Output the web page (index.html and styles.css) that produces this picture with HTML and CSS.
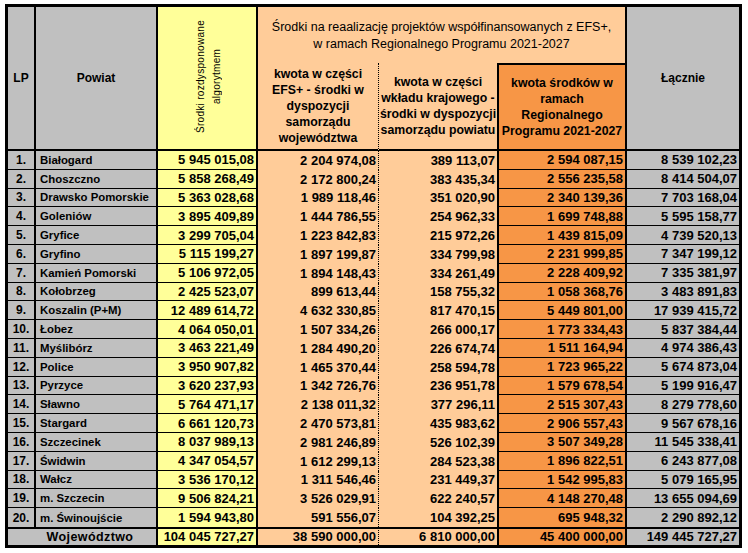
FILE: index.html
```html
<!DOCTYPE html>
<html lang="pl">
<head>
<meta charset="utf-8">
<title>Środki EFS+ – powiaty</title>
<link rel="stylesheet" href="styles.css">
</head>
<body>
<div class="wrap">
<table class="grid">
  <colgroup>
    <col class="c-lp"><col class="c-pow"><col class="c-alg"><col class="c-efs"><col class="c-kraj"><col class="c-rp"><col class="c-sum">
  </colgroup>
  <thead>
    <tr class="h1">
      <th class="lp hd" rowspan="2">LP</th>
      <th class="pow hd" rowspan="2">Powiat</th>
      <th class="alg hd" rowspan="2"><div class="rot">Środki rozdysponowane<br>algorytmem</div></th>
      <th class="super" colspan="3">Środki na reaalizację projektów współfinansowanych z EFS+,<br>w ramach Regionalnego Programu 2021-2027</th>
      <th class="sum hd last-col" rowspan="2">Łącznie</th>
    </tr>
    <tr class="h2">
      <th class="efs sub">kwota w części<br>EFS+ - środki w<br>dyspozycji<br>samorządu<br>województwa</th>
      <th class="kraj sub">kwota w części<br>wkładu krajowego -<br>środki w dyspozycji<br>samorządu powiatu</th>
      <th class="rp sub">kwota środków w<br>ramach<br>Regionalnego<br>Programu 2021-2027</th>
    </tr>
  </thead>
  <tbody>
    <tr><td class="lp">1.</td><td class="pow">Białogard</td><td class="alg">5 945 015,08</td><td class="efs">2 204 974,08</td><td class="kraj">389 113,07</td><td class="rp">2 594 087,15</td><td class="sum">8 539 102,23</td></tr>
    <tr><td class="lp">2.</td><td class="pow">Choszczno</td><td class="alg">5 858 268,49</td><td class="efs">2 172 800,24</td><td class="kraj">383 435,34</td><td class="rp">2 556 235,58</td><td class="sum">8 414 504,07</td></tr>
    <tr><td class="lp">3.</td><td class="pow">Drawsko Pomorskie</td><td class="alg">5 363 028,68</td><td class="efs">1 989 118,46</td><td class="kraj">351 020,90</td><td class="rp">2 340 139,36</td><td class="sum">7 703 168,04</td></tr>
    <tr><td class="lp">4.</td><td class="pow">Goleniów</td><td class="alg">3 895 409,89</td><td class="efs">1 444 786,55</td><td class="kraj">254 962,33</td><td class="rp">1 699 748,88</td><td class="sum">5 595 158,77</td></tr>
    <tr><td class="lp">5.</td><td class="pow">Gryfice</td><td class="alg">3 299 705,04</td><td class="efs">1 223 842,83</td><td class="kraj">215 972,26</td><td class="rp">1 439 815,09</td><td class="sum">4 739 520,13</td></tr>
    <tr><td class="lp">6.</td><td class="pow">Gryfino</td><td class="alg">5 115 199,27</td><td class="efs">1 897 199,87</td><td class="kraj">334 799,98</td><td class="rp">2 231 999,85</td><td class="sum">7 347 199,12</td></tr>
    <tr><td class="lp">7.</td><td class="pow">Kamień Pomorski</td><td class="alg">5 106 972,05</td><td class="efs">1 894 148,43</td><td class="kraj">334 261,49</td><td class="rp">2 228 409,92</td><td class="sum">7 335 381,97</td></tr>
    <tr><td class="lp">8.</td><td class="pow">Kołobrzeg</td><td class="alg">2 425 523,07</td><td class="efs">899 613,44</td><td class="kraj">158 755,32</td><td class="rp">1 058 368,76</td><td class="sum">3 483 891,83</td></tr>
    <tr><td class="lp">9.</td><td class="pow">Koszalin (P+M)</td><td class="alg">12 489 614,72</td><td class="efs">4 632 330,85</td><td class="kraj">817 470,15</td><td class="rp">5 449 801,00</td><td class="sum">17 939 415,72</td></tr>
    <tr><td class="lp">10.</td><td class="pow">Łobez</td><td class="alg">4 064 050,01</td><td class="efs">1 507 334,26</td><td class="kraj">266 000,17</td><td class="rp">1 773 334,43</td><td class="sum">5 837 384,44</td></tr>
    <tr><td class="lp">11.</td><td class="pow">Myślibórz</td><td class="alg">3 463 221,49</td><td class="efs">1 284 490,20</td><td class="kraj">226 674,74</td><td class="rp">1 511 164,94</td><td class="sum">4 974 386,43</td></tr>
    <tr><td class="lp">12.</td><td class="pow">Police</td><td class="alg">3 950 907,82</td><td class="efs">1 465 370,44</td><td class="kraj">258 594,78</td><td class="rp">1 723 965,22</td><td class="sum">5 674 873,04</td></tr>
    <tr><td class="lp">13.</td><td class="pow">Pyrzyce</td><td class="alg">3 620 237,93</td><td class="efs">1 342 726,76</td><td class="kraj">236 951,78</td><td class="rp">1 579 678,54</td><td class="sum">5 199 916,47</td></tr>
    <tr><td class="lp">14.</td><td class="pow">Sławno</td><td class="alg">5 764 471,17</td><td class="efs">2 138 011,32</td><td class="kraj">377 296,11</td><td class="rp">2 515 307,43</td><td class="sum">8 279 778,60</td></tr>
    <tr><td class="lp">15.</td><td class="pow">Stargard</td><td class="alg">6 661 120,73</td><td class="efs">2 470 573,81</td><td class="kraj">435 983,62</td><td class="rp">2 906 557,43</td><td class="sum">9 567 678,16</td></tr>
    <tr><td class="lp">16.</td><td class="pow">Szczecinek</td><td class="alg">8 037 989,13</td><td class="efs">2 981 246,89</td><td class="kraj">526 102,39</td><td class="rp">3 507 349,28</td><td class="sum">11 545 338,41</td></tr>
    <tr><td class="lp">17.</td><td class="pow">Świdwin</td><td class="alg">4 347 054,57</td><td class="efs">1 612 299,13</td><td class="kraj">284 523,38</td><td class="rp">1 896 822,51</td><td class="sum">6 243 877,08</td></tr>
    <tr><td class="lp">18.</td><td class="pow">Wałcz</td><td class="alg">3 536 170,12</td><td class="efs">1 311 546,46</td><td class="kraj">231 449,37</td><td class="rp">1 542 995,83</td><td class="sum">5 079 165,95</td></tr>
    <tr><td class="lp">19.</td><td class="pow">m. Szczecin</td><td class="alg">9 506 824,21</td><td class="efs">3 526 029,91</td><td class="kraj">622 240,57</td><td class="rp">4 148 270,48</td><td class="sum">13 655 094,69</td></tr>
    <tr class="last"><td class="lp">20.</td><td class="pow">m. Świnoujście</td><td class="alg">1 594 943,80</td><td class="efs">591 556,07</td><td class="kraj">104 392,25</td><td class="rp">695 948,32</td><td class="sum">2 290 892,12</td></tr>
  </tbody>
  <tfoot>
    <tr class="total"><td class="woj" colspan="2">Województwo</td><td class="alg">104 045 727,27</td><td class="efs">38 590 000,00</td><td class="kraj">6 810 000,00</td><td class="rp">45 400 000,00</td><td class="sum">149 445 727,27</td></tr>
  </tfoot>
</table>
</div>
</body>
</html>
```

FILE: styles.css
```css
* { box-sizing: border-box; }

body {
  margin: 0;
  background: #ffffff;
  font-family: "Liberation Sans", Arial, sans-serif;
  color: #000;
}

.wrap {
  padding: 4px 0 0 5px;
}

.grid {
  border-collapse: separate;
  border-spacing: 0;
  table-layout: fixed;
  width: 737px;
  border: 3px solid #000;
}

.c-lp { width: 28px; }
.c-pow { width: 122px; }
.c-alg { width: 100px; }
.c-efs { width: 121px; }
.c-kraj { width: 120px; }
.c-rp { width: 128px; }
.c-sum { width: 112px; }

th, td {
  padding: 0;
  vertical-align: middle;
}

/* colours */
.lp, .pow, .sum, .woj { background: #c0c0c0; }
.alg { background: #ffff99; }
.efs, .kraj, .super { background: #ffcc99; }
.rp { background: #f79646; }

/* header */
.h1 { height: 56px; }
.h2 { height: 88px; }

th {
  font-size: 12px;
  font-weight: bold;
  text-align: center;
}

th.hd {
  border-bottom: 2px solid #000;
}

th.lp, th.pow, th.alg {
  border-right: 2px solid #000;
}

th.super {
  font-size: 12.5px;
  font-weight: normal;
  line-height: 17px;
  white-space: nowrap;
  border-right: 2px solid #000;
  padding-top: 2px;
}

th.sub {
  font-size: 12.3px;
  line-height: 16px;
  white-space: nowrap;
  border-bottom: 2px solid #000;
}

th.efs { border-right: 1px dotted #000; }
th.kraj { border-right: 2px solid #000; }
th.rp {
  border-top: 2px solid #000;
  border-right: 2px solid #000;
}

.rot {
  display: inline-block;
  writing-mode: vertical-rl;
  transform: rotate(180deg);
  font-size: 10px;
  font-weight: normal;
  letter-spacing: 0.3px;
  line-height: 16px;
  text-align: center;
  margin-left: 3px;
}

/* body rows */
tbody tr { height: 18.8px; }

td {
  font-size: 13px;
  font-weight: bold;
  text-align: right;
  white-space: nowrap;
  padding-right: 2px;
}

td.lp {
  text-align: center;
  font-size: 12px;
  padding-right: 0;
  border-right: 2px solid #000;
  border-bottom: 1px solid #000;
}

td.pow {
  text-align: left;
  font-size: 11.4px;
  padding-left: 4px;
  border-right: 2px solid #000;
  border-bottom: 1px solid #000;
}

td.alg {
  border-right: 2px solid #000;
  border-bottom: 1px solid #000;
}

td.efs { border-right: 1px dotted #000; }
td.kraj { border-right: 2px solid #000; }

td.rp {
  border-right: 2px solid #000;
  border-bottom: 1px solid #000;
}

td.sum {
  border-bottom: 1px solid #000;
}

tr.last td { border-bottom: 0; }

/* total row */
tr.total { height: 18px; }

tr.total td {
  border-top: 2px solid #000;
  border-bottom: 0;
}

td.woj {
  text-align: center;
  font-size: 12.5px;
  letter-spacing: 0.4px;
  padding-right: 0;
  padding-left: 16px;
  border-right: 2px solid #000;
}
```
